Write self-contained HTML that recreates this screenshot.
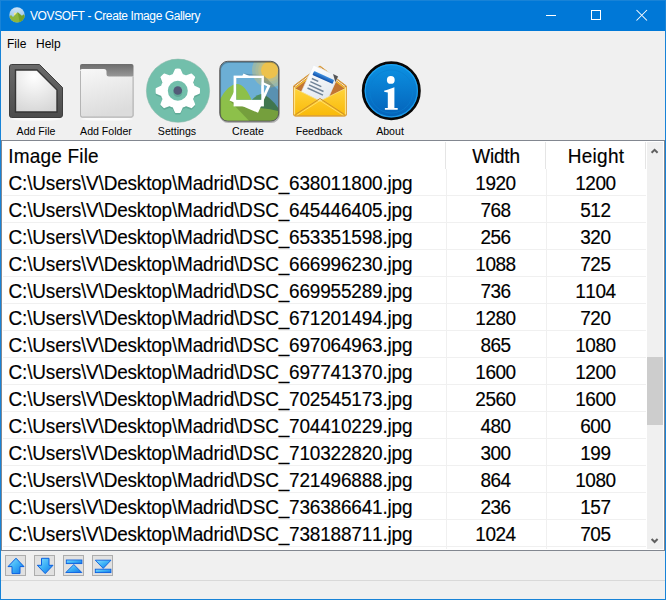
<!DOCTYPE html>
<html><head><meta charset="utf-8">
<style>
*{margin:0;padding:0;box-sizing:border-box}
html,body{width:666px;height:600px;overflow:hidden;background:#F0F0F0;font-family:"Liberation Sans",sans-serif;font-kerning:none}
.abs{position:absolute}
#title{left:0;top:0;width:666px;height:31px;background:#0078D7}
#ttext{left:30px;top:9px;color:#fff;font-size:12px;letter-spacing:-0.4px;white-space:pre}
#bl{left:0;top:0;width:1px;height:600px;background:#1883D7}
#br{left:665px;top:0;width:1px;height:600px;background:#1883D7}
#bb{left:0;top:599px;width:666px;height:1px;background:#1883D7}
.menu{top:37px;font-size:12px;color:#000;white-space:pre}
.lbl{top:125px;font-size:10.6px;color:#000;white-space:pre;text-align:center;width:80px}
#list{left:1px;top:140px;width:664px;height:411px;border:1px solid #828790;background:#fff}
.hdr{top:145.8px;height:27px;font-size:19px;letter-spacing:-0.22px;white-space:pre;transform:scaleY(1.06);transform-origin:0 17px;-webkit-text-stroke:0.15px #000}
.hsep{top:142px;width:1px;height:27px;background:#E5E5E5}
.row{position:absolute;left:3px;width:643px;height:27px;font-size:19px;letter-spacing:-0.22px;white-space:pre;-webkit-text-stroke:0.15px #000}
.row .c1{position:absolute;left:5.6px;letter-spacing:-0.19px;top:3.6px;transform:scaleY(1.06);transform-origin:0 17px}
.row .c2{position:absolute;left:442.5px;letter-spacing:-0.5px;width:100px;text-align:center;top:3.6px;transform:scaleY(1.06);transform-origin:0 17px}
.row .c3{position:absolute;left:542.4px;letter-spacing:-0.5px;width:100px;text-align:center;top:3.6px;transform:scaleY(1.06);transform-origin:0 17px}
.hl{position:absolute;left:3px;width:643px;height:1px;background:#F0F0F0}
.vl{position:absolute;top:169px;width:1px;height:380px;background:#F0F0F0}
#sb{left:647px;top:142px;width:16px;height:407px;background:#F0F0F0}
#thumb{left:647px;top:357px;width:16px;height:68px;background:#CDCDCD}
.btn{top:555px;width:21px;height:21px;background:#E1E1E1;border:1px solid #ADADAD}
#sep{left:1px;top:580px;width:664px;height:1px;background:#D9D9D9}
</style></head><body>
<div id="title" class="abs"></div>
<svg class="abs" style="left:0;top:0" width="666" height="140" viewBox="0 0 666 140">
<defs>
<linearGradient id="afFrame" x1="0" y1="0" x2="0" y2="1"><stop offset="0" stop-color="#6a6a6a"/><stop offset="1" stop-color="#4c4c4c"/></linearGradient>
<radialGradient id="afIn" cx="0.45" cy="0.15" r="0.9"><stop offset="0" stop-color="#ffffff"/><stop offset="1" stop-color="#d6d6d6"/></radialGradient>
<linearGradient id="fdTop" gradientUnits="userSpaceOnUse" x1="0" y1="64" x2="0" y2="77"><stop offset="0" stop-color="#6c6c6c"/><stop offset="1" stop-color="#999999"/></linearGradient>
<linearGradient id="fdBody" x1="0" y1="0" x2="0.3" y2="1"><stop offset="0" stop-color="#f8f8f8"/><stop offset="1" stop-color="#dcdcdc"/></linearGradient>
<linearGradient id="envY" x1="0" y1="0" x2="0" y2="1"><stop offset="0" stop-color="#FFD43C"/><stop offset="1" stop-color="#F9BA0A"/></linearGradient>
<linearGradient id="paperG" x1="0" y1="0" x2="1" y2="1"><stop offset="0" stop-color="#ffffff"/><stop offset="1" stop-color="#dde3ea"/></linearGradient>
<linearGradient id="stripeG" x1="0" y1="0" x2="0" y2="1"><stop offset="0" stop-color="#3d8fe0"/><stop offset="1" stop-color="#1250a8"/></linearGradient>
<linearGradient id="abG" x1="0" y1="0" x2="0" y2="1"><stop offset="0" stop-color="#0C93E4"/><stop offset="1" stop-color="#0461B8"/></linearGradient>
<radialGradient id="appSky" cx="0.5" cy="0" r="1"><stop offset="0" stop-color="#d8e9f8"/><stop offset="1" stop-color="#84b9e6"/></radialGradient>
<clipPath id="crClip"><rect x="220" y="61.5" width="58.5" height="59.5" rx="8"/></clipPath>
<clipPath id="frontIn"><rect x="236.3" y="78.1" width="24.9" height="21.6"/></clipPath>
<clipPath id="appClip"><circle cx="17" cy="14.9" r="7.7"/></clipPath>
<g id="scene">
  <rect x="219" y="61" width="61" height="61" fill="#6CAFD5"/>
  <circle cx="269.5" cy="70.2" r="17.5" fill="#96B7AD"/>
  <circle cx="269.5" cy="70.2" r="14.2" fill="#A6BA9E"/>
  <circle cx="269.5" cy="70.2" r="11.3" fill="#B8BE8E"/>
  <circle cx="269.5" cy="70.2" r="8.5" fill="#EDC24D"/>
  <path d="M240,121 Q250,96 261,94 Q270,95 281,112 V121Z" fill="#4E8E5E"/>
  <path d="M219,121 V101 Q228,84 237,84 Q245,84 252,101 L262,121Z" fill="#8DC04A"/>
  <path d="M219,121 V108 Q240,106 260,108 Q272,109 281,112 V121Z" fill="#8DC04A"/>
</g>
</defs>
<!-- app icon -->
<g clip-path="url(#appClip)">
  <rect x="8" y="6" width="18" height="18" fill="url(#appSky)"/>
  <circle cx="15.3" cy="14" r="1.5" fill="#f4ea8c"/>
  <path d="M8,17.5 L11,15 L13,17 L17.7,12.3 L22,16 L23.5,14.5 L26,17 V24 H8Z" fill="#8db63c"/>
  <path d="M17.7,12.3 L22,16 L23.5,14.5 L26,17 V24 H20Z" fill="#73a02c"/>
</g>
<!-- window controls -->
<rect x="546" y="15" width="10" height="1" fill="#fff"/>
<rect x="591.5" y="10.5" width="9" height="9" fill="none" stroke="#fff" stroke-width="1"/>
<path d="M636.5,10 L647,20.5 M647,10 L636.5,20.5" stroke="#fff" stroke-width="1.05"/>

<!-- Add File -->
<ellipse cx="36" cy="119" rx="26" ry="1.6" fill="#fbfbfb"/>
<ellipse cx="106.8" cy="119" rx="26" ry="1.6" fill="#fbfbfb"/>
<path d="M11.5,64.5 H39.5 L62.5,87.5 V115 Q62.5,117.5 60,117.5 H11.5 Q9.5,117.5 9.5,115 V67 Q9.5,64.5 11.5,64.5Z" fill="url(#afFrame)" stroke="#3e3e3e" stroke-width="1"/>
<path d="M15.5,70 H37 L57,90 V112 H15.5Z" fill="url(#afIn)" stroke="#363636" stroke-width="1.4"/>
<!-- Add Folder -->
<path d="M82,64 H131.5 Q133.5,64 133.5,66 V115.5 Q133.5,117.5 131.5,117.5 H82 Q80,117.5 80,115.5 V66 Q80,64 82,64Z" fill="url(#fdTop)"/>
<path d="M80,71 Q80,69 82,69 H104 Q106.5,69 106.5,71.5 V74 Q106.5,76.5 109,76.5 H133.5 V115.5 Q133.5,117.5 131.5,117.5 H82 Q80,117.5 80,115.5Z" fill="url(#fdBody)"/>
<path d="M80.5,71 V115 Q80.5,117 82.5,117 H131 Q133,117 133,115 V77" fill="none" stroke="#b4b4b4" stroke-width="1"/>
<!-- Settings -->
<circle cx="178" cy="90.7" r="31.6" fill="#72BFAB" stroke="#86b9aa" stroke-width="0.6"/>
<path transform="translate(0,1.6)" fill="#5EAA96" stroke="#5EAA96" stroke-width="1.6" stroke-linejoin="round" d="M173.30,74.82 L175.70,69.50 A21.4,21.4 0 0 1 179.90,69.50 L182.30,74.82 A16.6,16.6 0 0 1 185.92,76.32 L191.37,74.26 A21.4,21.4 0 0 1 194.34,77.23 L192.28,82.68 A16.6,16.6 0 0 1 193.78,86.30 L199.10,88.70 A21.4,21.4 0 0 1 199.10,92.90 L193.78,95.30 A16.6,16.6 0 0 1 192.28,98.92 L194.34,104.37 A21.4,21.4 0 0 1 191.37,107.34 L185.92,105.28 A16.6,16.6 0 0 1 182.30,106.78 L179.90,112.10 A21.4,21.4 0 0 1 175.70,112.10 L173.30,106.78 A16.6,16.6 0 0 1 169.68,105.28 L164.23,107.34 A21.4,21.4 0 0 1 161.26,104.37 L163.32,98.92 A16.6,16.6 0 0 1 161.82,95.30 L156.50,92.90 A21.4,21.4 0 0 1 156.50,88.70 L161.82,86.30 A16.6,16.6 0 0 1 163.32,82.68 L161.26,77.23 A21.4,21.4 0 0 1 164.23,74.26 L169.68,76.32 A16.6,16.6 0 0 1 173.30,74.82Z"/>
<path fill="#ffffff" stroke="#ffffff" stroke-width="1.6" stroke-linejoin="round" d="M173.30,74.82 L175.70,69.50 A21.4,21.4 0 0 1 179.90,69.50 L182.30,74.82 A16.6,16.6 0 0 1 185.92,76.32 L191.37,74.26 A21.4,21.4 0 0 1 194.34,77.23 L192.28,82.68 A16.6,16.6 0 0 1 193.78,86.30 L199.10,88.70 A21.4,21.4 0 0 1 199.10,92.90 L193.78,95.30 A16.6,16.6 0 0 1 192.28,98.92 L194.34,104.37 A21.4,21.4 0 0 1 191.37,107.34 L185.92,105.28 A16.6,16.6 0 0 1 182.30,106.78 L179.90,112.10 A21.4,21.4 0 0 1 175.70,112.10 L173.30,106.78 A16.6,16.6 0 0 1 169.68,105.28 L164.23,107.34 A21.4,21.4 0 0 1 161.26,104.37 L163.32,98.92 A16.6,16.6 0 0 1 161.82,95.30 L156.50,92.90 A21.4,21.4 0 0 1 156.50,88.70 L161.82,86.30 A16.6,16.6 0 0 1 163.32,82.68 L161.26,77.23 A21.4,21.4 0 0 1 164.23,74.26 L169.68,76.32 A16.6,16.6 0 0 1 173.30,74.82Z"/>
<circle cx="177.8" cy="90.8" r="10" fill="#72BFAB"/>
<circle cx="177.8" cy="92.6" r="4.5" fill="#5FA996"/>
<circle cx="177.8" cy="90.5" r="4.3" fill="#535B78"/>
<!-- Create -->
<g clip-path="url(#crClip)">
  <use href="#scene"/>
  <path d="M243.5,73.4 L263.9,75.6 L383.9,195.6 L340,215 L229.5,100.6Z" fill="#000" opacity="0.17"/>
  <path d="M243.5,73.4 L270.5,85.5 L258,112.8 L229.5,100.6Z" fill="#fff"/>
  <path d="M246,76.5 L267.2,86.2 L260,102 L238.8,92.3Z" fill="#6CAFD5"/>
  <rect x="233.6" y="75.6" width="30.3" height="30.8" fill="#fff"/>
  <g clip-path="url(#frontIn)"><use href="#scene"/></g>
</g>
<rect x="220.3" y="62.3" width="58.9" height="59.9" rx="8" fill="none" stroke="#000" stroke-opacity="0.25" stroke-width="1.5"/>
<rect x="219.8" y="61.3" width="58.9" height="59.9" rx="8" fill="none" stroke="#555" stroke-width="1"/>
<!-- Feedback -->
<path d="M293.5,86 L320,66 L346.5,86 V114 Q346.5,116 344.5,116 H295.5 Q293.5,116 293.5,114Z" fill="#C27532" stroke="#DCA240" stroke-width="1"/>
<path d="M294.8,86.6 L320,67.6 L345.2,86.6" fill="none" stroke="#FFF6D0" stroke-width="1"/>
<path d="M295.2,88 L320,69.5 L344.8,88" fill="none" stroke="#F7C233" stroke-width="1.2"/>
<g transform="translate(313.5,65.2) rotate(24.5)">
  <rect x="0" y="0" width="27" height="34" fill="url(#paperG)" stroke="#e8edf2" stroke-width="0.6"/>
  <rect x="3" y="5" width="22" height="4.2" rx="0.8" fill="url(#stripeG)"/>
  <path d="M21.5,0 L27,0 L27,6.5Z" fill="#555"/>
  <rect x="4" y="12" width="7" height="1.5" fill="#6f8296"/>
  <rect x="4" y="15.5" width="12" height="1.5" fill="#6f8296"/>
  <rect x="4" y="19" width="16" height="1.5" fill="#6f8296"/>
  <rect x="4" y="22.5" width="17" height="1.5" fill="#6f8296"/>
</g>
<path d="M294,88 L320,101 L346,88 V114 Q346,115.5 344.5,115.5 H295.5 Q294,115.5 294,114Z" fill="url(#envY)"/>
<path d="M294.5,88.5 L320,101 L345.5,88.5" fill="none" stroke="#f5e08a" stroke-width="0.8"/>
<path d="M295.5,114.5 L320,98.5 L344.5,114.5" fill="none" stroke="#C98E30" stroke-width="1"/>
<path d="M296.5,115.5 L320,100.5 L343.5,115.5" fill="none" stroke="#FFE27A" stroke-width="0.8"/>
<path d="M293.5,86 V114 Q293.5,116 295.5,116 H344.5 Q346.5,116 346.5,114 V86" fill="none" stroke="#DDA545" stroke-width="1"/>
<path d="M294.6,87 V114.5 M345.4,87 V114.5" fill="none" stroke="#FFF0B0" stroke-width="0.8"/>
<!-- About -->
<circle cx="391.3" cy="90.75" r="28.1" fill="url(#abG)" stroke="#080808" stroke-width="2.8"/>
<circle cx="391.3" cy="90.75" r="26.1" fill="none" stroke="#20A6F4" stroke-width="1.2" opacity="0.8"/>
<circle cx="391.3" cy="91.5" r="21.5" fill="none" stroke="#0a7fd0" stroke-width="1" opacity="0.6"/>
<circle cx="390.8" cy="79.9" r="3.9" fill="#fff"/>
<path d="M384.3,90.6 Q387,90 394.4,87.2 V107.9 H397.7 V109.8 H384.9 V107.9 H387.8 V92.4 Q386,91.8 384.3,92Z" fill="#fff"/>
</svg>
<div id="ttext" class="abs">VOVSOFT - Create Image Gallery</div>
<div class="abs menu" style="left:7px">File</div>
<div class="abs menu" style="left:36px">Help</div>

<div class="abs lbl" style="left:-4px">Add File</div>
<div class="abs lbl" style="left:66px">Add Folder</div>
<div class="abs lbl" style="left:137px">Settings</div>
<div class="abs lbl" style="left:208px">Create</div>
<div class="abs lbl" style="left:279px">Feedback</div>
<div class="abs lbl" style="left:350px">About</div>

<div id="list" class="abs"></div>
<div class="abs hdr" style="left:8.2px;letter-spacing:0.2px">Image File</div>
<div class="abs hdr" style="left:446px;width:100px;text-align:center">Width</div>
<div class="abs hdr" style="left:546px;width:100px;text-align:center;letter-spacing:0.3px">Height</div>
<div class="abs hsep" style="left:445px"></div>
<div class="abs hsep" style="left:545px"></div>
<div class="abs hsep" style="left:645px"></div>

<div class="row" style="top:169px"><span class="c1">C:\Users\V\Desktop\Madrid\DSC_638011800.jpg</span><span class="c2">1920</span><span class="c3">1200</span></div>
<div class="hl" style="top:195px"></div>
<div class="row" style="top:196px"><span class="c1">C:\Users\V\Desktop\Madrid\DSC_645446405.jpg</span><span class="c2">768</span><span class="c3">512</span></div>
<div class="hl" style="top:222px"></div>
<div class="row" style="top:223px"><span class="c1">C:\Users\V\Desktop\Madrid\DSC_653351598.jpg</span><span class="c2">256</span><span class="c3">320</span></div>
<div class="hl" style="top:249px"></div>
<div class="row" style="top:250px"><span class="c1">C:\Users\V\Desktop\Madrid\DSC_666996230.jpg</span><span class="c2">1088</span><span class="c3">725</span></div>
<div class="hl" style="top:276px"></div>
<div class="row" style="top:277px"><span class="c1">C:\Users\V\Desktop\Madrid\DSC_669955289.jpg</span><span class="c2">736</span><span class="c3">1104</span></div>
<div class="hl" style="top:303px"></div>
<div class="row" style="top:304px"><span class="c1">C:\Users\V\Desktop\Madrid\DSC_671201494.jpg</span><span class="c2">1280</span><span class="c3">720</span></div>
<div class="hl" style="top:330px"></div>
<div class="row" style="top:331px"><span class="c1">C:\Users\V\Desktop\Madrid\DSC_697064963.jpg</span><span class="c2">865</span><span class="c3">1080</span></div>
<div class="hl" style="top:357px"></div>
<div class="row" style="top:358px"><span class="c1">C:\Users\V\Desktop\Madrid\DSC_697741370.jpg</span><span class="c2">1600</span><span class="c3">1200</span></div>
<div class="hl" style="top:384px"></div>
<div class="row" style="top:385px"><span class="c1">C:\Users\V\Desktop\Madrid\DSC_702545173.jpg</span><span class="c2">2560</span><span class="c3">1600</span></div>
<div class="hl" style="top:411px"></div>
<div class="row" style="top:412px"><span class="c1">C:\Users\V\Desktop\Madrid\DSC_704410229.jpg</span><span class="c2">480</span><span class="c3">600</span></div>
<div class="hl" style="top:438px"></div>
<div class="row" style="top:439px"><span class="c1">C:\Users\V\Desktop\Madrid\DSC_710322820.jpg</span><span class="c2">300</span><span class="c3">199</span></div>
<div class="hl" style="top:465px"></div>
<div class="row" style="top:466px"><span class="c1">C:\Users\V\Desktop\Madrid\DSC_721496888.jpg</span><span class="c2">864</span><span class="c3">1080</span></div>
<div class="hl" style="top:492px"></div>
<div class="row" style="top:493px"><span class="c1">C:\Users\V\Desktop\Madrid\DSC_736386641.jpg</span><span class="c2">236</span><span class="c3">157</span></div>
<div class="hl" style="top:519px"></div>
<div class="row" style="top:520px"><span class="c1">C:\Users\V\Desktop\Madrid\DSC_738188711.jpg</span><span class="c2">1024</span><span class="c3">705</span></div>
<div class="hl" style="top:546px"></div>
<div class="vl" style="left:446px"></div><div class="vl" style="left:546px"></div>

<div id="sb" class="abs"></div>
<div id="thumb" class="abs"></div>

<div class="abs btn" style="left:5px"></div>
<div class="abs btn" style="left:34px"></div>
<div class="abs btn" style="left:63px"></div>
<div class="abs btn" style="left:92px"></div>
<div id="sep" class="abs"></div>

<svg class="abs" style="left:0;top:0" width="666" height="600" viewBox="0 0 666 600">
<defs>
<linearGradient id="arG" x1="0" y1="0" x2="1" y2="0"><stop offset="0" stop-color="#7fd4fb"/><stop offset="0.5" stop-color="#3fb1f5"/><stop offset="1" stop-color="#1a86ea"/></linearGradient>
<linearGradient id="arV" x1="0" y1="0" x2="1" y2="1"><stop offset="0" stop-color="#8ae0fd"/><stop offset="0.5" stop-color="#3bb0f6"/><stop offset="1" stop-color="#1272e6"/></linearGradient>
</defs>
<!-- scrollbar arrows -->
<path d="M651.6,152.8 L654.6,149.8 L657.6,152.8" fill="none" stroke="#606060" stroke-width="2"/>
<path d="M651.6,539 L654.6,542 L657.6,539" fill="none" stroke="#606060" stroke-width="2"/>
<!-- up -->
<path d="M16,558.2 L24,566.6 H20 V573.6 H12 V566.6 H8Z" fill="url(#arV)" stroke="#0a5fe0" stroke-width="1" stroke-linejoin="round"/>
<!-- down -->
<path d="M41.5,558.3 H49 V565.3 H53 L45.2,573.6 L37.3,565.3 H41.5Z" fill="url(#arV)" stroke="#0a5fe0" stroke-width="1" stroke-linejoin="round"/>
<!-- top -->
<rect x="66.3" y="560" width="15.6" height="3.6" fill="url(#arV)" stroke="#0a5fe0" stroke-width="0.9"/>
<path d="M73.8,564.5 L81.8,572.5 H65.8Z" fill="url(#arV)" stroke="#0a5fe0" stroke-width="0.9" stroke-linejoin="round"/>
<!-- bottom -->
<path d="M95.3,560.2 H111 L103.2,568.4Z" fill="url(#arV)" stroke="#0a5fe0" stroke-width="0.9" stroke-linejoin="round"/>
<rect x="95.3" y="569.2" width="15.6" height="3.4" fill="url(#arV)" stroke="#0a5fe0" stroke-width="0.9"/>
</svg>
<div class="abs" style="left:0;top:0;width:666px;height:1px;background:#1883D7"></div>
<div id="bl" class="abs"></div>
<div id="br" class="abs"></div>
<div id="bb" class="abs"></div>
</body></html>
